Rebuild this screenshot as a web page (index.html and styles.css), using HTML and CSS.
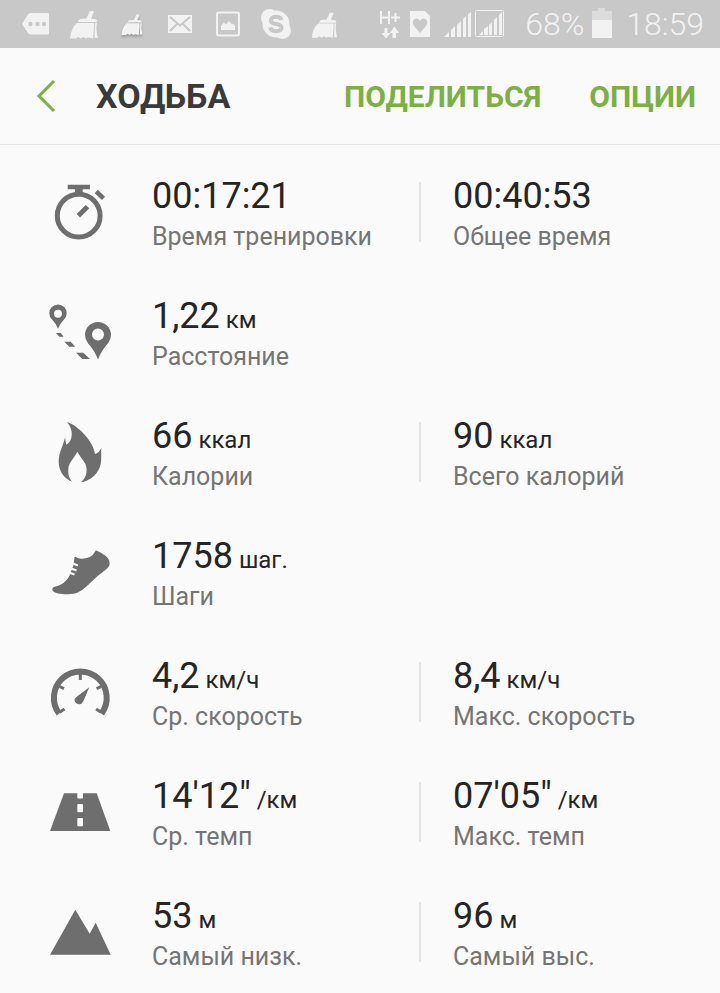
FILE: index.html
```html
<!DOCTYPE html>
<html lang="ru">

<head>
  <meta charset="UTF-8">
  <meta name="viewport" content="width=device-width, initial-scale=1.0">
  <title>Ходьба</title>
  <link rel="stylesheet" href="styles.css">
</head>

<body>
  <svg width="0" height="0" class="sprite">
    <symbol id="broom" viewBox="0 0 32 32">
      <path d="M21.500 3.500Q24 2 26 4L23 10.500L28.500 11.500L29 14H9.500L12 11L18.500 10.500ZM9 15H26V20L25 30.500L20 29.500L18 30.500L15 29L13 30.500L10 29L8 30.500H2Q3 20 9 15ZM27 15H29Q27.500 22 30 30H26.500Z" />
    </symbol>
  </svg>

  <div class="status">
    <div class="notices">
      <svg width="32" height="32" viewBox="0 0 32 32">
        <path d="M2 16L8 6.500Q9 5 11 5H28Q29 5 29 6V25.500Q29 26.500 28 26.500H11Q9 26.500 8 25Z" />
        <g class="hole"><circle cx="10.500" cy="16" r="2.200" /><circle cx="17.500" cy="16" r="2.200" /><circle cx="24" cy="16" r="2.200" /></g>
      </svg>
      <svg width="32" height="32"><use href="#broom" /></svg>
      <svg class="shadow" width="24" height="24"><use href="#broom" /></svg>
      <svg width="32" height="32" viewBox="0 0 32 32">
        <path d="M4 7H28V25H4Z" />
        <path class="hole-line" d="M6 9L16 17.500L26 9M6 23L13 16M26 23L19 16" />
      </svg>
      <svg width="32" height="32" viewBox="0 0 32 32">
        <rect class="frame" x="5" y="4.500" width="22" height="23" rx="2" />
        <path d="M9 22V18L12 14.500L14 16.500L17 13L20 16.500L21 15.500L23 18V22Z" />
      </svg>
      <svg width="32" height="32" viewBox="0 0 32 32">
        <circle cx="16" cy="16" r="13.500" /><circle cx="9.500" cy="9.500" r="8.500" /><circle cx="22.500" cy="22.500" r="8.500" />
        <path class="skype" d="M21.500 12C21 9.500 18.500 8.800 16 8.800C13 8.800 10.800 10.200 10.800 12.500C10.800 17.500 21.500 14.500 21.500 19.600C21.500 22 19 23.200 16 23.200C13 23.200 10.800 22 10.300 19.500" />
      </svg>
      <svg width="29" height="29"><use href="#broom" /></svg>
    </div>
    <div class="system">
      <svg width="24" height="32" viewBox="0 0 24 32">
        <path class="line" d="M4 3V16M12 3V16M4 9.500H12M14 9.500H23M18.500 5V14" />
        <path d="M7.500 20H10.500V25H13.500L9 30.500L4.500 25H7.500ZM15.500 30V25H13L17.500 18.500L22 25H19V30Z" />
      </svg>
      <svg width="22" height="32" viewBox="0 0 22 32">
        <path d="M1 3H16L21 8V29H1Z" />
        <path class="hole" d="M11 25L5 18Q2.500 14 5 11.500Q8 9 11 13Q14 9 17 11.500Q19.500 14 17 18Z" />
      </svg>
      <svg class="signal" width="62" height="32" viewBox="0 0 62 32">
        <path d="M1 29L6 24V29ZM8 29V22L12 18V29ZM14 29V17L18 13V29ZM20 29V11L23 8V29ZM25 29V6L28 4V29Z" />
        <rect class="thin" x="32.500" y="2.500" width="28" height="26" rx="1" />
        <path d="M36 27L40 23V27ZM41 27V21L45 18V27ZM46 27V17L49 14V27ZM51 27V12L54 9V27ZM56 27V7L59 4V27Z" />
      </svg>
      <span class="charge">68%</span>
      <svg width="20" height="32" viewBox="0 0 20 32">
        <path class="faded" d="M0 3H6V0H13V3H20V12H0Z" />
        <path d="M0 12H20V30H0Z" />
      </svg>
      <span class="clock">18:59</span>
    </div>
  </div>

  <header class="header">
    <button class="back" aria-label="Назад">
      <svg width="20" height="34" viewBox="0 0 20 34"><path d="M18 2L3 17L18 32" /></svg>
    </button>
    <h1>ХОДЬБА</h1>
    <button>ПОДЕЛИТЬСЯ</button>
    <button>ОПЦИИ</button>
  </header>

  <main class="list">
    <section class="item">
      <svg class="icon" viewBox="0 0 64 64">
        <circle class="ring" cx="30.700" cy="35.700" r="21.400" />
        <path d="M19.700 4.700H42V9.300H34.700V15H27V9.300H19.700ZM49.700 9.700L57 16.700L54 20L46.700 13.300ZM37.700 25L41.300 28.300L32 37.500L28.700 34Z" />
      </svg>
      <div class="info">
        <p class="value">00:17:21</p>
        <p class="name">Время тренировки</p>
      </div>
      <div class="info">
        <p class="value">00:40:53</p>
        <p class="name">Общее время</p>
      </div>
    </section>

    <section class="item">
      <svg class="icon" viewBox="0 0 64 64">
        <path fill-rule="evenodd" d="M10 28.700Q8 23.500 4 19.500A8.700 8.700 0 1 1 16 19.500Q12 23.500 10 28.700ZM10 9.700A4 4 0 1 0 10 17.700A4 4 0 1 0 10 9.700ZM50 59.500Q47 51 40 43.200A13 13 0 1 1 60 43.200Q53 51 50 59.500ZM50 28.500A6 6 0 1 0 50 40.500A6 6 0 1 0 50 28.500Z" />
        <path d="M8 33H12.700L15.700 36.700H11.300ZM16.300 41.700H22.700L27.300 46.700H21.300ZM28 52.700H35.300L42 59H34.300Z" />
      </svg>
      <div class="info">
        <p class="value">1,22<small> км</small></p>
        <p class="name">Расстояние</p>
      </div>
    </section>

    <section class="item">
      <svg class="icon" viewBox="0 0 64 64">
        <path d="M19 2C29 5 45 20 47 34Q51 33 53.300 28C53 36 54 42 51.500 48C48 56 41 61 32.700 62.300C38 58 39 53 38.500 48C38 42 32.500 38 29.300 31.700C26.500 38 21 42 20.400 48C20 54 20.500 58 24.300 61.700C15 58 10.700 50 10.700 41.700C10.700 32 15 27 17 17.300Q17.500 22 18.300 24.700C25 21 26 10 19 2Z" />
      </svg>
      <div class="info">
        <p class="value">66<small> ккал</small></p>
        <p class="name">Калории</p>
      </div>
      <div class="info">
        <p class="value">90<small> ккал</small></p>
        <p class="name">Всего калорий</p>
      </div>
    </section>

    <section class="item">
      <svg class="icon" viewBox="0 0 64 64">
        <path d="M48 10.300C51 12 58 14.500 61 20Q62.500 24 60.500 27C57 31 50 35 45.300 40C39 46 33 52 27 53.500C20 55 8 54.500 4.800 51Q3.500 48 6 47C13 45.500 18 42 21.300 36L25.500 25L26.500 17Q27.500 16.500 29 17.700C34 20 44 18 46 13Z" />
        <path class="lace" d="M22 22.500L30 25.500M20.500 27.500L28.500 30.500M18 31.500L26.500 34.500" />
      </svg>
      <div class="info">
        <p class="value">1758<small> шаг.</small></p>
        <p class="name">Шаги</p>
      </div>
    </section>

    <section class="item">
      <svg class="icon" viewBox="0 0 64 64">
        <path class="arc" d="M11.100 53.600A26.400 26.400 0 1 1 53.500 53.600" />
        <path class="tick" d="M32.300 12V20M11.500 26.500L16 28.700M53.100 26.500L48.600 28.700M11.500 52.300L16.500 48.900M53.100 52.300L48.100 48.900" />
        <path d="M41.300 27.300L35.500 41Q33.500 44.800 30.500 44.300Q26 43 26.700 39Q27.500 37.500 29 36.500Z" />
      </svg>
      <div class="info">
        <p class="value">4,2<small> км/ч</small></p>
        <p class="name">Ср. скорость</p>
      </div>
      <div class="info">
        <p class="value">8,4<small> км/ч</small></p>
        <p class="name">Макс. скорость</p>
      </div>
    </section>

    <section class="item">
      <svg class="icon" viewBox="0 0 64 64">
        <path d="M16 13.300H48.700L62.300 51H2Z" />
        <path class="gap" d="M29.300 13H35V17.500Q35 18.500 34 18.500H30.300Q29.300 18.500 29.300 17.500Z" />
        <rect class="gap" x="29.300" y="24" width="5.700" height="8.200" rx="1" />
        <rect class="gap" x="29.300" y="38" width="5.700" height="8.200" rx="1" />
      </svg>
      <div class="info">
        <p class="value">14'12"<small> /км</small></p>
        <p class="name">Ср. темп</p>
      </div>
      <div class="info">
        <p class="value">07'05"<small> /км</small></p>
        <p class="name">Макс. темп</p>
      </div>
    </section>

    <section class="item">
      <svg class="icon" viewBox="0 0 64 64">
        <path d="M27.300 9.700L41.700 33.700L47.700 22.700L62.700 54.700H2Z" />
      </svg>
      <div class="info">
        <p class="value">53<small> м</small></p>
        <p class="name">Самый низк.</p>
      </div>
      <div class="info">
        <p class="value">96<small> м</small></p>
        <p class="name">Самый выс.</p>
      </div>
    </section>
  </main>
</body>

</html>
```

FILE: styles.css
```css
body {
  margin: 0;
  background: #fafafa;
  color: #252525;
  font-family: Roboto, "Noto Sans", sans-serif;
}

.sprite {
  position: absolute;
}

/* status bar */
.status {
  height: 48px;
  padding: 0 16px 0 12px;
  background: #c8c8c8;
  color: #f2f2f2;
  fill: #f2f2f2;
  display: flex;
  justify-content: space-between;
  align-items: center;
}

.notices {
  display: grid;
  grid-template-columns: repeat(7, 48px);
  place-items: center;
}

.system {
  display: flex;
  align-items: center;
  gap: 8px;
  font-size: 32px;
  font-weight: 300;
}

.system .signal {
  margin: 0 12px 0 4px;
}

.system .clock {
  margin-left: 6px;
}

.status .hole {
  fill: #c8c8c8;
}

.status .hole-line {
  fill: none;
  stroke: #c8c8c8;
  stroke-width: 2;
}

.status .line,
.status .frame {
  fill: none;
  stroke: #f2f2f2;
  stroke-width: 2;
}

.status .thin {
  fill: none;
  stroke: #f2f2f2;
  stroke-width: 1;
}

.status .skype {
  fill: none;
  stroke: #c8c8c8;
  stroke-width: 4;
}

.status .faded {
  fill: #dcdcdc;
}

.status .shadow {
  filter: drop-shadow(0 2px 1px #999);
}

/* header */
.header {
  height: 96px;
  padding: 0 24px 0 36px;
  border-bottom: 1px solid #e4e4e4;
  display: flex;
  align-items: center;
  gap: 48px;
}

.header h1 {
  flex: 1;
  margin: 0;
  color: #3a3a3a;
  font-size: 34px;
  font-weight: 700;
}

.header button {
  padding: 0;
  border: none;
  background: none;
  color: #7cb043;
  font: 700 30px Roboto, "Noto Sans", sans-serif;
  cursor: pointer;
}

.header .back {
  display: flex;
  margin-right: -8px;
}

.back path {
  fill: none;
  stroke: #7cb043;
  stroke-width: 3;
}

/* workout stats */
.list {
  padding: 7px 34px 0 48px;
}

.item {
  height: 120px;
  display: grid;
  grid-template-columns: 104px 1fr 1fr;
  align-items: center;
}

.icon {
  width: 64px;
  height: 64px;
  fill: #6e6e6e;
}

.icon .ring,
.icon .arc,
.icon .tick {
  fill: none;
  stroke: #6e6e6e;
  stroke-width: 5;
}

.icon .arc {
  stroke-width: 6;
}

.icon .tick {
  stroke-width: 3;
}

.icon .lace {
  stroke: #fafafa;
  stroke-width: 2;
}

.icon .gap {
  fill: #fafafa;
}

.item .info {
  height: 60px;
}

.item .info + .info {
  padding-left: 32px;
  border-left: 2px solid #e4e4e4;
}

.item p {
  margin: 0;
  white-space: nowrap;
}

.item .value {
  font-size: 36px;
  line-height: 28px;
}

.item .value small {
  font-size: 24px;
  line-height: 0;
}

.item .name {
  margin-top: 12px;
  color: #757575;
  font-size: 25px;
  line-height: 30px;
}
```
